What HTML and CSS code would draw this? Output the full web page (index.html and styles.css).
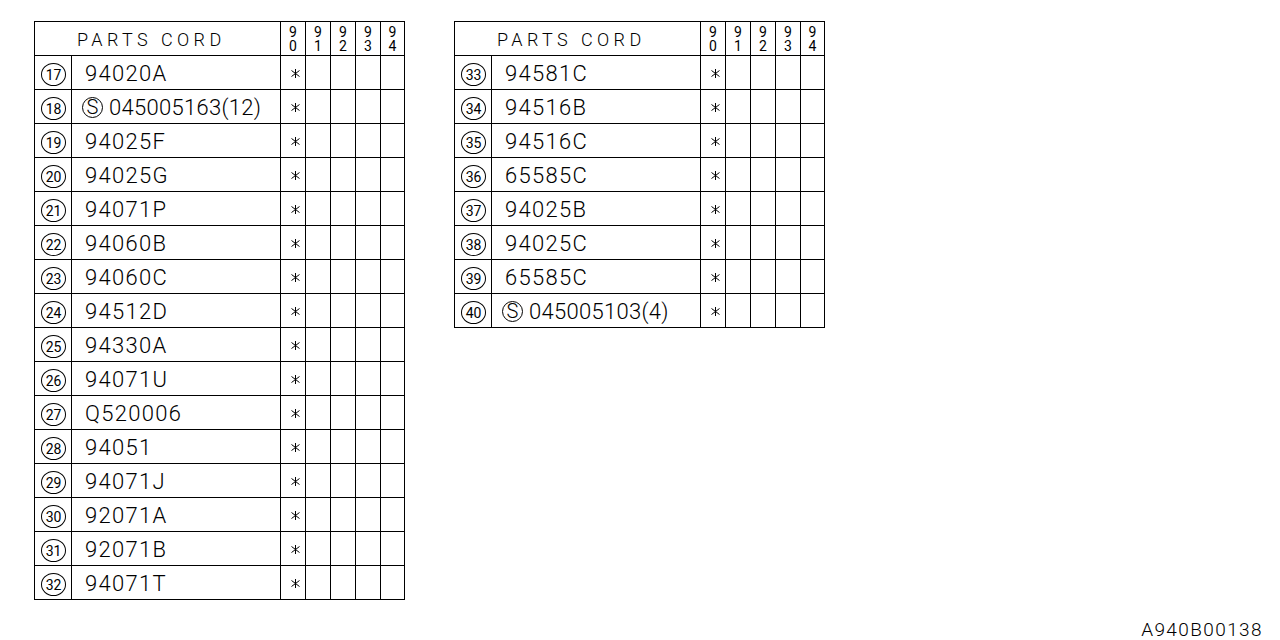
FILE: index.html
```html
<!DOCTYPE html>
<html>
<head>
<meta charset="utf-8">
<link rel="stylesheet" href="styles.css">
</head>
<body>
<div class="page">
  <div class="tables">
    <div class="parts">
      <div class="head-title">PARTS CORD</div>
      <div class="yr"><span>9</span><span>0</span></div><div class="yr"><span>9</span><span>1</span></div><div class="yr"><span>9</span><span>2</span></div><div class="yr"><span>9</span><span>3</span></div><div class="yr"><span>9</span><span>4</span></div>

      <div class="no"><span class="circ">17</span></div><div class="code">94020A</div><div class="mark"><svg class="ast" viewBox="0 0 9 9"><path d="M4.5 0V9M0.5 1.5L8.5 7.5M0.5 7.5L8.5 1.5"/></svg></div><div></div><div></div><div></div><div></div>
      <div class="no"><span class="circ">18</span></div><div class="code"><span class="s">S</span><span class="tight">045005163(12)</span></div><div class="mark"><svg class="ast" viewBox="0 0 9 9"><path d="M4.5 0V9M0.5 1.5L8.5 7.5M0.5 7.5L8.5 1.5"/></svg></div><div></div><div></div><div></div><div></div>
      <div class="no"><span class="circ">19</span></div><div class="code">94025F</div><div class="mark"><svg class="ast" viewBox="0 0 9 9"><path d="M4.5 0V9M0.5 1.5L8.5 7.5M0.5 7.5L8.5 1.5"/></svg></div><div></div><div></div><div></div><div></div>
      <div class="no"><span class="circ">20</span></div><div class="code">94025G</div><div class="mark"><svg class="ast" viewBox="0 0 9 9"><path d="M4.5 0V9M0.5 1.5L8.5 7.5M0.5 7.5L8.5 1.5"/></svg></div><div></div><div></div><div></div><div></div>
      <div class="no"><span class="circ">21</span></div><div class="code">94071P</div><div class="mark"><svg class="ast" viewBox="0 0 9 9"><path d="M4.5 0V9M0.5 1.5L8.5 7.5M0.5 7.5L8.5 1.5"/></svg></div><div></div><div></div><div></div><div></div>
      <div class="no"><span class="circ">22</span></div><div class="code">94060B</div><div class="mark"><svg class="ast" viewBox="0 0 9 9"><path d="M4.5 0V9M0.5 1.5L8.5 7.5M0.5 7.5L8.5 1.5"/></svg></div><div></div><div></div><div></div><div></div>
      <div class="no"><span class="circ">23</span></div><div class="code">94060C</div><div class="mark"><svg class="ast" viewBox="0 0 9 9"><path d="M4.5 0V9M0.5 1.5L8.5 7.5M0.5 7.5L8.5 1.5"/></svg></div><div></div><div></div><div></div><div></div>
      <div class="no"><span class="circ">24</span></div><div class="code">94512D</div><div class="mark"><svg class="ast" viewBox="0 0 9 9"><path d="M4.5 0V9M0.5 1.5L8.5 7.5M0.5 7.5L8.5 1.5"/></svg></div><div></div><div></div><div></div><div></div>
      <div class="no"><span class="circ">25</span></div><div class="code">94330A</div><div class="mark"><svg class="ast" viewBox="0 0 9 9"><path d="M4.5 0V9M0.5 1.5L8.5 7.5M0.5 7.5L8.5 1.5"/></svg></div><div></div><div></div><div></div><div></div>
      <div class="no"><span class="circ">26</span></div><div class="code">94071U</div><div class="mark"><svg class="ast" viewBox="0 0 9 9"><path d="M4.5 0V9M0.5 1.5L8.5 7.5M0.5 7.5L8.5 1.5"/></svg></div><div></div><div></div><div></div><div></div>
      <div class="no"><span class="circ">27</span></div><div class="code">Q520006</div><div class="mark"><svg class="ast" viewBox="0 0 9 9"><path d="M4.5 0V9M0.5 1.5L8.5 7.5M0.5 7.5L8.5 1.5"/></svg></div><div></div><div></div><div></div><div></div>
      <div class="no"><span class="circ">28</span></div><div class="code">94051</div><div class="mark"><svg class="ast" viewBox="0 0 9 9"><path d="M4.5 0V9M0.5 1.5L8.5 7.5M0.5 7.5L8.5 1.5"/></svg></div><div></div><div></div><div></div><div></div>
      <div class="no"><span class="circ">29</span></div><div class="code">94071J</div><div class="mark"><svg class="ast" viewBox="0 0 9 9"><path d="M4.5 0V9M0.5 1.5L8.5 7.5M0.5 7.5L8.5 1.5"/></svg></div><div></div><div></div><div></div><div></div>
      <div class="no"><span class="circ">30</span></div><div class="code">92071A</div><div class="mark"><svg class="ast" viewBox="0 0 9 9"><path d="M4.5 0V9M0.5 1.5L8.5 7.5M0.5 7.5L8.5 1.5"/></svg></div><div></div><div></div><div></div><div></div>
      <div class="no"><span class="circ">31</span></div><div class="code">92071B</div><div class="mark"><svg class="ast" viewBox="0 0 9 9"><path d="M4.5 0V9M0.5 1.5L8.5 7.5M0.5 7.5L8.5 1.5"/></svg></div><div></div><div></div><div></div><div></div>
      <div class="no"><span class="circ">32</span></div><div class="code">94071T</div><div class="mark"><svg class="ast" viewBox="0 0 9 9"><path d="M4.5 0V9M0.5 1.5L8.5 7.5M0.5 7.5L8.5 1.5"/></svg></div><div></div><div></div><div></div><div></div>
    </div>

    <div class="parts">
      <div class="head-title">PARTS CORD</div>
      <div class="yr"><span>9</span><span>0</span></div><div class="yr"><span>9</span><span>1</span></div><div class="yr"><span>9</span><span>2</span></div><div class="yr"><span>9</span><span>3</span></div><div class="yr"><span>9</span><span>4</span></div>

      <div class="no"><span class="circ">33</span></div><div class="code">94581C</div><div class="mark"><svg class="ast" viewBox="0 0 9 9"><path d="M4.5 0V9M0.5 1.5L8.5 7.5M0.5 7.5L8.5 1.5"/></svg></div><div></div><div></div><div></div><div></div>
      <div class="no"><span class="circ">34</span></div><div class="code">94516B</div><div class="mark"><svg class="ast" viewBox="0 0 9 9"><path d="M4.5 0V9M0.5 1.5L8.5 7.5M0.5 7.5L8.5 1.5"/></svg></div><div></div><div></div><div></div><div></div>
      <div class="no"><span class="circ">35</span></div><div class="code">94516C</div><div class="mark"><svg class="ast" viewBox="0 0 9 9"><path d="M4.5 0V9M0.5 1.5L8.5 7.5M0.5 7.5L8.5 1.5"/></svg></div><div></div><div></div><div></div><div></div>
      <div class="no"><span class="circ">36</span></div><div class="code">65585C</div><div class="mark"><svg class="ast" viewBox="0 0 9 9"><path d="M4.5 0V9M0.5 1.5L8.5 7.5M0.5 7.5L8.5 1.5"/></svg></div><div></div><div></div><div></div><div></div>
      <div class="no"><span class="circ">37</span></div><div class="code">94025B</div><div class="mark"><svg class="ast" viewBox="0 0 9 9"><path d="M4.5 0V9M0.5 1.5L8.5 7.5M0.5 7.5L8.5 1.5"/></svg></div><div></div><div></div><div></div><div></div>
      <div class="no"><span class="circ">38</span></div><div class="code">94025C</div><div class="mark"><svg class="ast" viewBox="0 0 9 9"><path d="M4.5 0V9M0.5 1.5L8.5 7.5M0.5 7.5L8.5 1.5"/></svg></div><div></div><div></div><div></div><div></div>
      <div class="no"><span class="circ">39</span></div><div class="code">65585C</div><div class="mark"><svg class="ast" viewBox="0 0 9 9"><path d="M4.5 0V9M0.5 1.5L8.5 7.5M0.5 7.5L8.5 1.5"/></svg></div><div></div><div></div><div></div><div></div>
      <div class="no"><span class="circ">40</span></div><div class="code"><span class="s">S</span><span class="tight">045005103(4)</span></div><div class="mark"><svg class="ast" viewBox="0 0 9 9"><path d="M4.5 0V9M0.5 1.5L8.5 7.5M0.5 7.5L8.5 1.5"/></svg></div><div></div><div></div><div></div><div></div>
    </div>
  </div>
  <div class="drawing-no">A940B00138</div>
</div>
</body>
</html>
```

FILE: styles.css
```css
html, body {
  margin: 0;
  padding: 0;
  background: #fff;
}

.page {
  height: 640px;
  box-sizing: border-box;
  display: flex;
  flex-direction: column;
  padding: 21px 0 0 34px;
  font-family: Roboto, "Liberation Sans", sans-serif;
  font-weight: 300;
  font-variant-numeric: tabular-nums;
  color: #000;
}

.tables {
  display: flex;
  align-items: flex-start;
  gap: 49px;
}

.parts {
  display: grid;
  grid-template-columns: 36px 208px 24px 24px 24px 24px 23px;
  grid-auto-rows: 33px;
  gap: 1px;
  padding: 1px;
  background: #000;
}

.parts > div {
  background: #fff;
}

.head-title {
  grid-column: span 2;
  font-size: 18px;
  letter-spacing: 4.4px;
  padding-left: 42px;
  padding-top: 2px;
  box-sizing: border-box;
  display: flex;
  align-items: center;
}

.yr {
  display: flex;
  flex-direction: column;
  align-items: center;
  font-size: 14px;
  font-weight: 400;
  line-height: 14px;
  padding-top: 3px;
  box-sizing: border-box;
}

.yr span {
  display: block;
  height: 14px;
}

.no {
  display: flex;
  align-items: center;
  justify-content: center;
}

.circ {
  width: 25px;
  height: 23px;
  border: 1px solid #000;
  border-radius: 50%;
  font-size: 14px;
  font-weight: 400;
  letter-spacing: 0;
  display: flex;
  align-items: center;
  justify-content: center;
  box-sizing: border-box;
  margin-left: 1px;
  margin-top: 4px;
}

.code {
  display: flex;
  align-items: center;
  font-size: 22px;
  letter-spacing: 1.3px;
  padding-left: 13px;
  padding-top: 2px;
  box-sizing: border-box;
}

.s {
  width: 21px;
  height: 21px;
  border: 1px solid #000;
  border-radius: 50%;
  box-sizing: border-box;
  font-size: 20px;
  letter-spacing: 0;
  display: flex;
  align-items: center;
  justify-content: center;
  margin-left: -3px;
  margin-right: 6px;
  margin-top: -1px;
}

.tight {
  letter-spacing: 0.3px;
}

.mark {
  display: flex;
  align-items: center;
  justify-content: center;
}

.ast {
  width: 9px;
  height: 9px;
  margin-left: 5px;
  margin-top: 2px;
  fill: none;
  stroke: #000;
  stroke-width: 1;
}

.drawing-no {
  margin-top: auto;
  align-self: flex-end;
  font-size: 19px;
  line-height: 20px;
  letter-spacing: 1.4px;
  padding-right: 17px;
}
```
